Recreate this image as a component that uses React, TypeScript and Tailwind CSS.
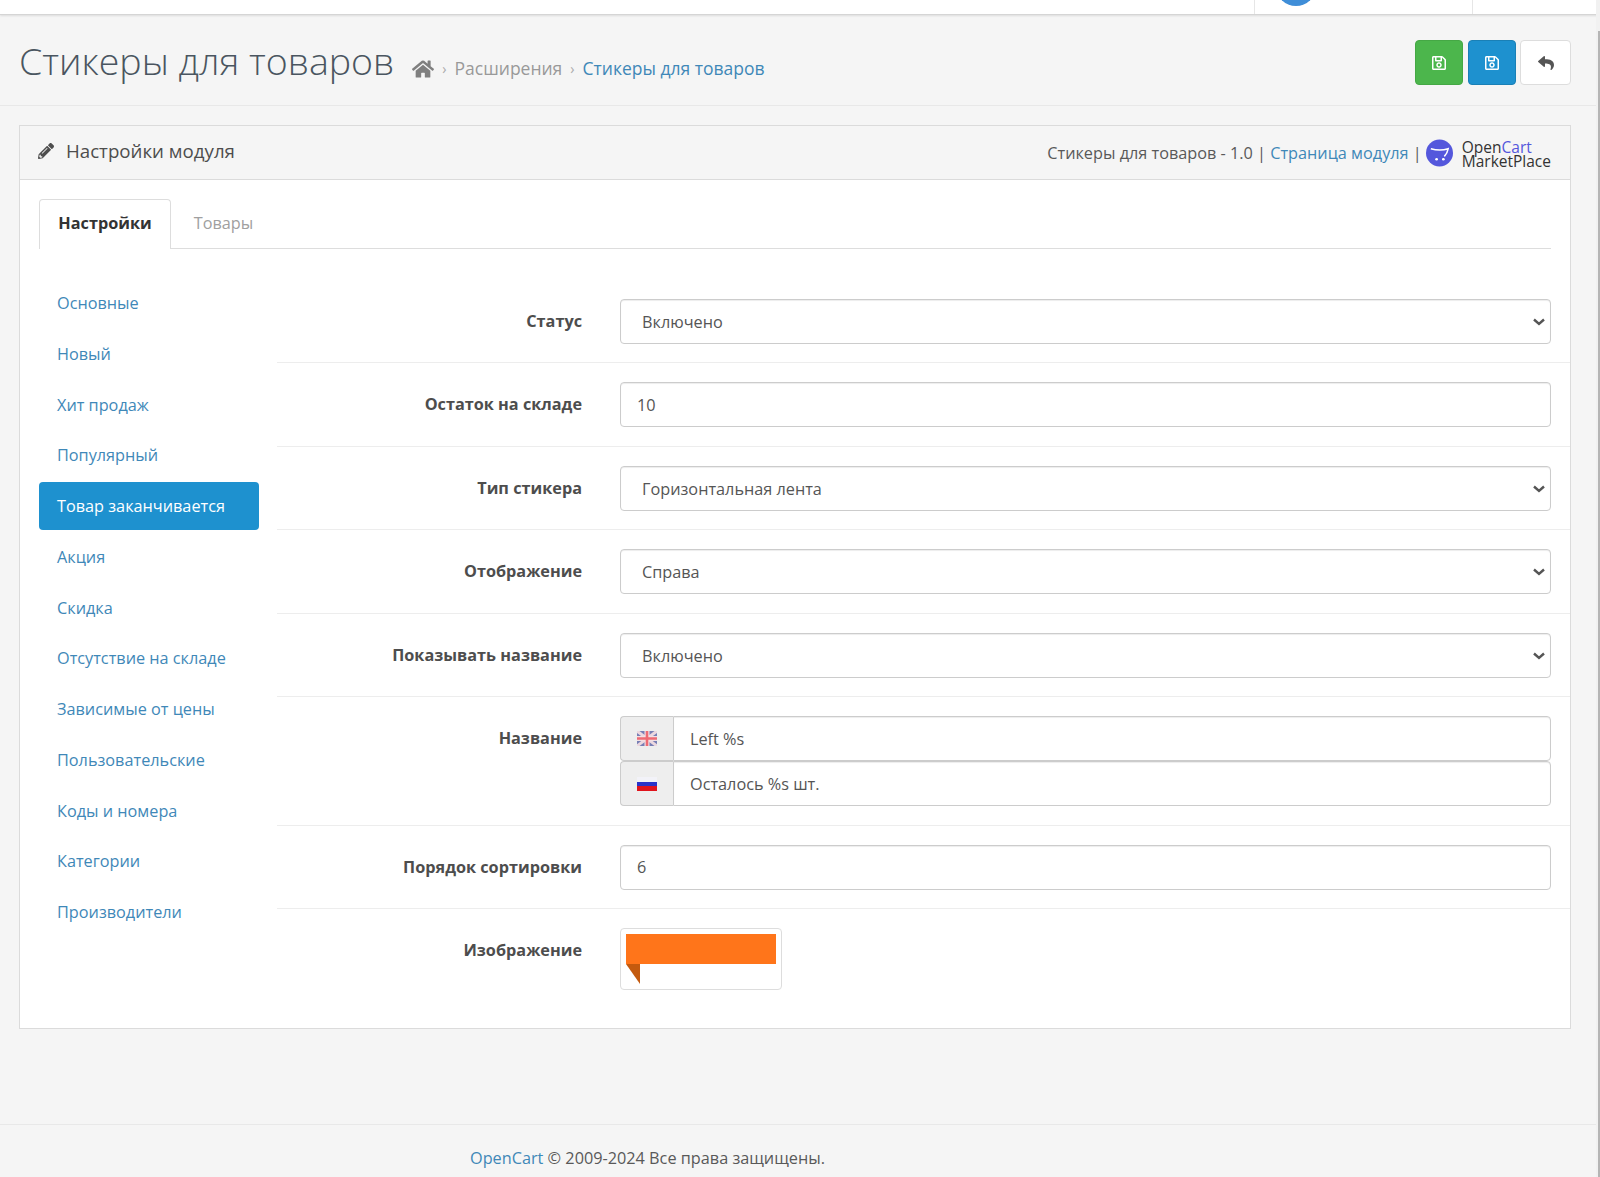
import { FaHome, FaPencilAlt, FaRegSave, FaReply } from "react-icons/fa";

const sections = [
  "Основные",
  "Новый",
  "Хит продаж",
  "Популярный",
  "Товар заканчивается",
  "Акция",
  "Скидка",
  "Отсутствие на складе",
  "Зависимые от цены",
  "Пользовательские",
  "Коды и номера",
  "Категории",
  "Производители",
];

const fieldClass =
  "h-[45px] w-full rounded border border-[#cccccc] bg-white px-4 text-[16.25px] text-[#555555] shadow-[inset_0_1px_1px_rgba(0,0,0,0.075)] outline-none";

function Row({ label, children, last }: { label: string; children: React.ReactNode; last?: boolean }) {
  return (
    <div className={`flex pt-[19px] pb-[18.5px] ${last ? "" : "border-b border-[#ededed]"}`}>
      <label className="w-[305px] shrink-0 pt-[10px] text-right text-[16.25px] font-bold text-[#4d4d4d]">{label}</label>
      <div className="ml-[38px] w-[931px] shrink-0">{children}</div>
    </div>
  );
}

function SelectField({ value }: { value: string }) {
  return (
    <div className="relative">
      <select className={`${fieldClass} appearance-none pt-[2px] pl-[21px]`} defaultValue={value}>
        <option>{value}</option>
      </select>
      <svg className="pointer-events-none absolute top-[19px] right-[6px]" width="12" height="8" viewBox="0 0 12 8">
        <path d="M1 1.5L6 6L11 1.5" fill="none" stroke="#555555" strokeWidth="2.4" />
      </svg>
    </div>
  );
}

function UkFlag() {
  return (
    <svg className="opacity-80 blur-[0.5px]" width="20" height="15" viewBox="0 0 20 15">
      <rect width="20" height="15" fill="#5a64a8" />
      <path d="M0 0L20 15M20 0L0 15" stroke="#ecd3dc" strokeWidth="3" />
      <path d="M10 0V15M0 7.5H20" stroke="#f3dde2" strokeWidth="5" />
      <path d="M10 0V15M0 7.5H20" stroke="#f04a55" strokeWidth="2.6" />
    </svg>
  );
}

function RuFlag() {
  return (
    <svg className="blur-[0.4px]" width="20" height="14" viewBox="0 0 20 14">
      <rect width="20" height="5" fill="#f2f2f8" />
      <rect y="5" width="20" height="4" fill="#2a34c8" />
      <rect y="9" width="20" height="5" fill="#e0141c" />
    </svg>
  );
}

function LangInput({ flag, value }: { flag: React.ReactNode; value: string }) {
  return (
    <div className="flex h-[45px]">
      <span className="flex w-[53px] shrink-0 items-center justify-center rounded-l border border-r-0 border-[#cccccc] bg-[#eeeeee]">
        {flag}
      </span>
      <input
        className="h-[45px] w-full rounded-r border border-[#cccccc] bg-white px-4 text-[16.25px] text-[#555555] shadow-[inset_0_1px_1px_rgba(0,0,0,0.075)] outline-none"
        defaultValue={value}
      />
    </div>
  );
}

function MarketLogo() {
  return (
    <div className="ml-[4px] flex items-center gap-[9px]">
      <svg width="27" height="28" viewBox="0 0 28 28">
        <circle cx="14" cy="14" r="14" fill="#5457dc" />
        <path d="M5 9.5C10 11 17 11.5 23 9.5C22.5 12.5 21 15.5 19 17.5" fill="none" stroke="#ffffff" strokeWidth="1.6" />
        <circle cx="11" cy="20.5" r="1.4" fill="#ffffff" />
        <circle cx="18" cy="20.5" r="1.4" fill="#ffffff" />
      </svg>
      <div className="pt-[3px] text-[15.5px] leading-[14.5px] text-[#333333]">
        <div>
          Open<span className="text-[#5457dc]">Cart</span>
        </div>
        <div>MarketPlace</div>
      </div>
    </div>
  );
}

export default function App() {
  return (
    <div className="relative h-[1177px] overflow-hidden bg-[#f5f5f5] font-['Open_Sans',sans-serif] text-[16.25px] text-[#595959]">
      {/* top bar */}
      <header className="flex h-[15px] justify-end overflow-hidden border-b border-[#d5d5d5] bg-white pr-[127px] shadow-[0_1px_2px_rgba(0,0,0,0.1)]">
        <div className="flex h-[15px] w-[219px] justify-start border-x border-[#e6e6e6] pl-[21px]">
          <div className="-mt-[34px] h-[40px] w-[40px] rounded-full bg-[#3f8ed8]" />
        </div>
      </header>

      {/* page title */}
      <div className="flex h-[91px] items-start justify-between border-b border-[#e8e8e8] pt-[25px] pr-[29px] pl-[19px]">
        <div className="flex items-center">
          <h1 className="-mt-[1px] text-[37.5px] leading-[44px] font-light text-[#4a5560]">Стикеры для товаров</h1>
          <div className="mt-[14px] ml-[18px] flex items-center text-[17.5px] text-[#999999]">
            <FaHome className="text-[22px] text-[#7f7f7f]" />
            <span className="mx-[8px] text-[14px] text-[#aaaaaa]">›</span>
            <span>Расширения</span>
            <span className="mx-[8px] text-[14px] text-[#aaaaaa]">›</span>
            <span className="text-[#3f88b8]">Стикеры для товаров</span>
          </div>
        </div>
        <div className="flex gap-[5px]">
          <button className="flex h-[45px] w-[48px] items-center justify-center rounded border border-[#45a845] bg-[#4cb64c] text-white">
            <FaRegSave className="text-[16px]" />
          </button>
          <button className="flex h-[45px] w-[48px] items-center justify-center rounded border border-[#1a80b6] bg-[#1e91cf] text-white">
            <FaRegSave className="text-[16px]" />
          </button>
          <button className="-ml-[1px] flex h-[45px] w-[51px] items-center justify-center rounded border border-[#dddddd] bg-white text-[#555555]">
            <FaReply className="text-[16px]" />
          </button>
        </div>
      </div>

      {/* panel */}
      <div className="mx-[19px] mt-[19px] w-[1552px] border border-[#dbdbdb] bg-white">
        <div className="flex h-[54px] items-center justify-between border-b border-[#dbdbdb] bg-[#f5f5f5] pr-[19px] pl-[18px]">
          <div className="-mt-[2px] flex items-center gap-[12px] text-[18.7px] text-[#4d4d4d]">
            <FaPencilAlt className="text-[16px]" />
            <span>Настройки модуля</span>
          </div>
          <div className="flex items-center text-[16.25px]">
            <span className="pt-[1px]">Стикеры для товаров - 1.0 |&nbsp;</span>
            <span className="pt-[1px] text-[#3f88b8]">Страница модуля</span>
            <span className="pt-[1px]">&nbsp;|</span>
            <MarketLogo />
          </div>
        </div>

        <div className="pt-[19px] pr-[19px] pb-[19px] pl-[19px]">
          {/* tabs */}
          <div className="flex h-[50px] border-b border-[#dddddd]">
            <div className="-mb-px flex h-[50px] w-[132px] items-center justify-center rounded-t border border-b-0 border-[#dddddd] bg-white pb-[3px] font-bold text-[#333333]">
              Настройки
            </div>
            <div className="flex w-[105px] items-center justify-center pb-[1px] text-[#a0a0a0]">Товары</div>
          </div>

          <div className="mt-[30px] flex">
            {/* section nav */}
            <nav className="w-[220px] shrink-0 pt-[0.2px]">
              {sections.map((name) => (
                <div
                  key={name}
                  className={`mb-[2.75px] flex h-[48px] items-center rounded px-[18px] ${
                    name === "Товар заканчивается" ? "bg-[#1e91cf] text-white" : "text-[#3f88b8]"
                  }`}
                >
                  {name}
                </div>
              ))}
            </nav>

            {/* form */}
            <div className="-mr-[19px] ml-[18px] w-[1293px] shrink-0 pt-[0.5px]">
              <Row label="Статус">
                <SelectField value="Включено" />
              </Row>
              <Row label="Остаток на складе">
                <input className={fieldClass} defaultValue="10" />
              </Row>
              <Row label="Тип стикера">
                <SelectField value="Горизонтальная лента" />
              </Row>
              <Row label="Отображение">
                <SelectField value="Справа" />
              </Row>
              <Row label="Показывать название">
                <SelectField value="Включено" />
              </Row>
              <Row label="Название">
                <LangInput flag={<UkFlag />} value="Left %s" />
                <LangInput flag={<RuFlag />} value="Осталось %s шт." />
              </Row>
              <Row label="Порядок сортировки">
                <input className={fieldClass} defaultValue="6" />
              </Row>
              <Row label="Изображение" last>
                <div className="h-[62px] w-[162px] rounded border border-[#dddddd] bg-white p-[5px]">
                  <svg width="150" height="50" viewBox="0 0 150 50">
                    <rect width="150" height="30" fill="#ff751a" />
                    <path d="M0 30H14V50Z" fill="#c45a0e" />
                  </svg>
                </div>
              </Row>
            </div>
          </div>
        </div>
      </div>

      <footer className="mt-[95px] h-[60px] border-t border-[#e8e8e8] pt-[21px] pl-[470px]">
        <span className="text-[#3f88b8]">OpenCart</span> © 2009-2024 Все права защищены.
      </footer>

      {/* window scrollbar */}
      <div className="absolute top-0 right-0 h-full w-[4px] bg-[#f1f1f1]">
        <div className="mt-[31px] ml-[2px] h-[1146px] w-[2px] bg-[#b5b5b5]" />
      </div>
    </div>
  );
}
